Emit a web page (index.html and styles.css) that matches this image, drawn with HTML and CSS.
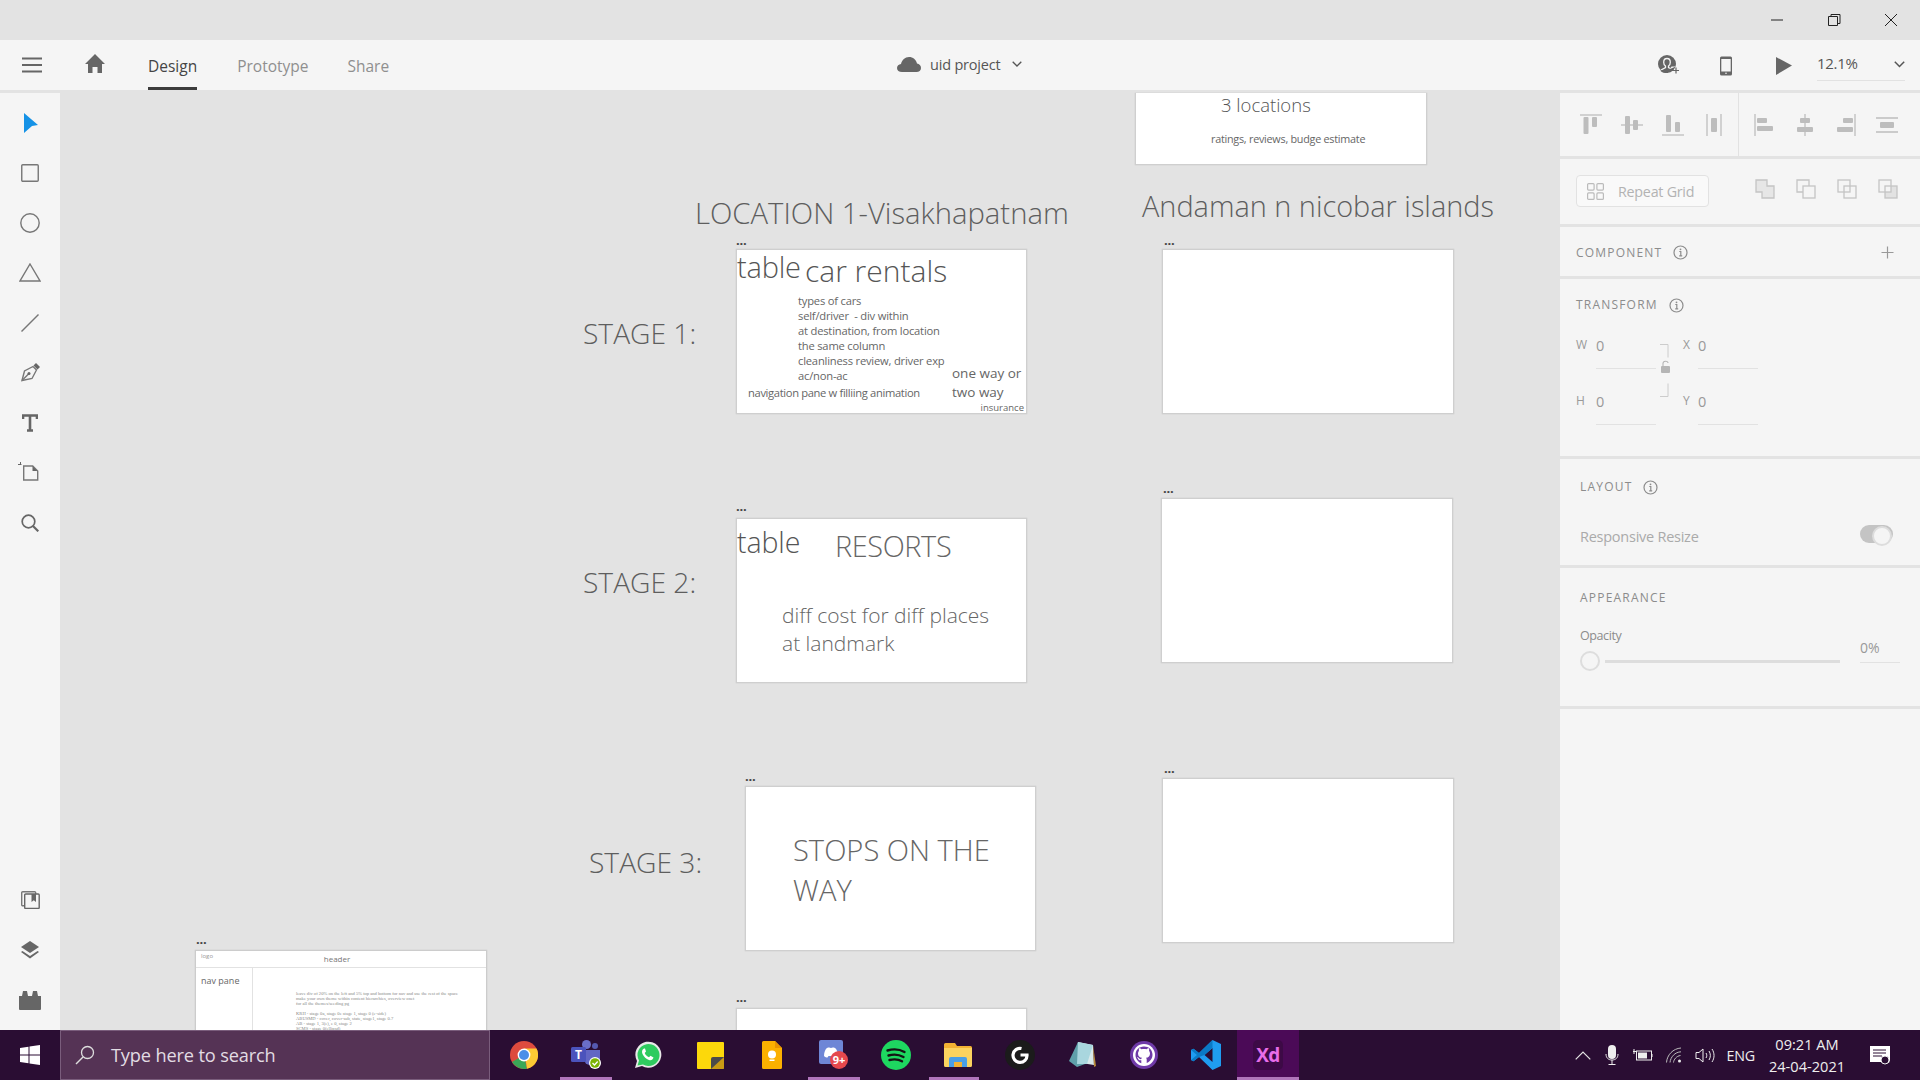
FILE: index.html
```html
<!DOCTYPE html>
<html lang="en">
<head>
<meta charset="utf-8">
<title>uid project - Adobe XD</title>
<link rel="stylesheet" href="styles.css">
</head>
<body>
<div class="app">
  <header class="titlebar">
    <svg class="win" width="16" height="16" viewBox="0 0 16 16"><path d="M2 8h12" class="ln"/></svg>
    <svg class="win" width="16" height="16" viewBox="0 0 16 16"><path d="M2.500 4.500h9v9h-9zM5 4.500V2.500h9v9h-2.500" class="ln"/></svg>
    <svg class="win" width="16" height="16" viewBox="0 0 16 16"><path d="M2 2l12 12M14 2L2 14" class="ln"/></svg>
  </header>
  <nav class="topbar">
    <svg class="burger" width="20" height="16" viewBox="0 0 20 16"><path d="M0 1.500h20M0 8h20M0 14.500h20" stroke="#666" stroke-width="2.200"/></svg>
    <svg class="home" width="22" height="20" viewBox="0 0 22 20"><path d="M11 0L21 10h-3v9h-4.500v-6h-5v6H4v-9H1z" fill="#666"/></svg>
    <a class="tab active">Design</a>
    <a class="tab">Prototype</a>
    <a class="tab">Share</a>
    <div class="doc">
      <svg width="24" height="15" viewBox="0 0 24 15"><path d="M5 15C2 15 0 13.500 0 11c0-2.200 1.800-3.800 4-4C5 3 8 0 12 0s7 2.500 8 6.500c2.300.3 4 2 4 4.500 0 2.500-2 4-4.500 4z" fill="#666"/></svg>
      <span>uid project</span>
      <svg width="10" height="6" viewBox="0 0 10 6"><path d="M.7.700L5 5l4.300-4.300" fill="none" stroke="#555" stroke-width="1.300"/></svg>
    </div>
    <div class="top-right">
      <svg class="tr-user" width="22" height="20" viewBox="0 0 22 20"><circle cx="9" cy="9" r="9" fill="#666"/><path d="M9 3.500c2.200 0 3.300 1.700 3.300 3.700 0 1.700-.8 3.200-1.800 3.800v1.500l2 1" fill="none" stroke="#f5f5f5" stroke-width="1.300"/><path d="M9 3.500C6.800 3.500 5.700 5.200 5.700 7.200c0 1.700.8 3.200 1.800 3.800v1.500L3 15" fill="none" stroke="#f5f5f5" stroke-width="1.300"/><path d="M15 15.500h6M18 12.500v6" stroke="#666" stroke-width="1.200"/><path d="M12 14l1.500-2.500h4.500" fill="#f5f5f5"/><path d="M3 15.500c1.500 1.500 3.500 2 7 2" fill="none" stroke="#666" stroke-width="1.200"/></svg>
      <svg class="tr-phone" width="12" height="20" viewBox="0 0 12 20"><rect width="12" height="19" y=".5" rx="1.500" fill="#666"/><rect x="1.300" y="3" width="9.400" height="12.500" fill="#f5f5f5"/><circle cx="6" cy="17.300" r=".8" fill="#f5f5f5"/></svg>
      <svg class="tr-play" width="16" height="18" viewBox="0 0 16 18"><path d="M0 0l16 8.500L0 18z" fill="#666"/></svg>
      <div class="zoomval"><span>12.1%</span><svg width="11" height="7" viewBox="0 0 11 7"><path d="M.8.800l4.700 4.700L10.200.800" fill="none" stroke="#555" stroke-width="1.500"/></svg></div>
    </div>
  </nav>
  <main class="main">
    <aside class="tools">
      <div class="tool"><svg class="ic-arrow" width="16" height="20" viewBox="0 0 16 20"><path d="M1 0l14 12-6 1-8 7z" fill="#1592e6"/></svg></div>
      <div class="tool"><svg width="18" height="18" viewBox="0 0 18 18"><rect x=".75" y=".75" width="16.500" height="16.500" rx="1" class="st"/></svg></div>
      <div class="tool"><svg width="20" height="20" viewBox="0 0 20 20"><circle cx="10" cy="10" r="9.200" class="st"/></svg></div>
      <div class="tool"><svg class="ic-tri" width="22" height="19" viewBox="0 0 22 19"><path d="M11 1l10 17H1z" class="st"/></svg></div>
      <div class="tool"><svg width="18" height="18" viewBox="0 0 18 18"><path d="M.5 17.500l17-17" class="st"/></svg></div>
      <div class="tool"><svg class="ic-pen" width="20" height="20" viewBox="0 0 20 20"><path d="M1 18.500L3.500 9 12 4.500l3.500 3.500L11 16.500z" class="st"/><path d="M1 18.500L7.500 12" class="st"/><circle cx="8" cy="11.500" r="1.500" fill="#666"/><path d="M12.500 3.500L15 1l4 4-2.500 2.500z" fill="#666"/></svg></div>
      <div class="tool"><svg width="16" height="18" viewBox="0 0 16 18"><path d="M8 2v15M1 5V1.500h14V5M5 16.500h6" fill="none" stroke="#666" stroke-width="2.600"/></svg></div>
      <div class="tool"><svg class="ic-board" width="21" height="19" viewBox="0 0 21 19"><path d="M5.700 4h9l5 5v9h-14z" class="st"/><path d="M14.500 4v5h5" fill="#666"/><path d="M0 2.500h3.500M2.500 0v2" stroke="#666" stroke-width="1"/></svg></div>
      <div class="tool"><svg width="18" height="18" viewBox="0 0 18 18"><circle cx="7.500" cy="7.500" r="6.300" fill="none" stroke="#666" stroke-width="1.700"/><path d="M12 12l5.300 5.300" stroke="#666" stroke-width="2.200"/></svg></div>
      <div class="tools-bottom">
        <div class="tool"><svg width="19" height="18" viewBox="0 0 19 18"><rect x=".7" y=".7" width="14" height="14" rx="1" class="st"/><rect x="3.700" y="3" width="14.500" height="14.500" rx="1" fill="#f5f5f5" stroke="#666" stroke-width="1.400"/><path d="M10.500 3h4.500v8l-2.200-1.800-2.300 1.800z" fill="#666"/></svg></div>
        <div class="tool"><svg width="20" height="18" viewBox="0 0 20 18"><path d="M10 0l9 6-9 6-9-6z" fill="#666"/><path d="M2.500 10L1 11l9 6.500 9-6.500-1.500-1L10 15z" fill="#666"/></svg></div>
        <div class="tool"><svg width="22" height="19" viewBox="0 0 22 19"><path d="M3 5l1-5h4l1 5h4l1-5h4l1 5h3v13a1 1 0 0 1-1 1H1a1 1 0 0 1-1-1V5z" fill="#666"/></svg></div>
      </div>
    </aside>

    <section class="canvas">
      <div class="board b-top">
        <p class="t-3loc">3 locations</p>
        <p class="t-rating">ratings, reviews, budge estimate</p>
      </div>
      <h2 class="label l-loc1">LOCATION 1-Visakhapatnam</h2>
      <h2 class="label l-loc2">Andaman n nicobar islands</h2>
      <h2 class="label l-s1">STAGE 1:</h2>
      <h2 class="label l-s2">STAGE 2:</h2>
      <h2 class="label l-s3">STAGE 3:</h2>

      <span class="dots d1">...</span>
      <div class="board b1">
        <span class="big t-table">table</span>
        <span class="big t-car">car rentals</span>
        <div class="t-list">
          <p>types of cars</p><p>self/driver&nbsp; - div within</p><p>at destination, from location</p><p>the same column</p><p>cleanliness review, driver exp</p><p>ac/non-ac</p>
        </div>
        <span class="t-nav">navigation pane w filliing animation</span>
        <span class="t-oneway">one way or<br>two way</span>
        <span class="t-ins">insurance</span>
      </div>
      <span class="dots d2">...</span>
      <div class="board b2">
        <span class="big t-table2">table</span>
        <span class="t-resorts">RESORTS</span>
        <span class="t-diff">diff cost for diff places<br>at landmark</span>
      </div>
      <span class="dots d3">...</span>
      <div class="board b3"><span class="t-stops">STOPS ON THE<br>WAY</span></div>
      <span class="dots d4">...</span>
      <div class="board b4"></div>
      <span class="dots d5">...</span>
      <div class="board b5"></div>
      <span class="dots d6">...</span>
      <div class="board b6"></div>
      <span class="dots d7">...</span>
      <div class="board b7"></div>
      <span class="dots d8">...</span>
      <div class="board b8">
        <div class="mini-head"><span class="mini-logo">logo</span><span class="mini-title">header</span></div>
        <div class="mini-body">
          <div class="mini-nav">nav pane</div>
          <div class="mini-text">
            <p>leave div of 20% on the left and 5% top and bottom for nav and use the rest of the space</p>
            <p>make your own theme within content hierarchies, overview onet</p>
            <p>for all the themes/seeding pg</p>
            <p class="gap">KRH - stage 0a, stage 0e stage 1, stage 0 (e-side)</p>
            <p>ABUSMD - cover, cover-sub, state, stage1, stage 0.7</p>
            <p>AB - stage 1, 3(e), e 0, stage 2</p>
            <p>SCMS - stage 0(ellipsd)</p>
          </div>
        </div>
      </div>
    </section>

    <aside class="panel">
      <div class="sec s-align">
        <div class="agroup ag1">
          <svg class="ai" width="24" height="22" viewBox="0 0 24 22"><path d="M1 1h22" class="al"/><rect x="4.500" y="3" width="5" height="17" rx="1" class="af"/><rect x="13" y="3" width="5" height="10" rx="1" class="af"/></svg>
          <svg class="ai" width="24" height="18" viewBox="0 0 24 18"><path d="M1 9h22" class="al"/><rect x="5" y="0" width="5" height="18" rx="1" class="af"/><rect x="13" y="4" width="5" height="10" rx="1" class="af"/></svg>
          <svg class="ai" width="24" height="22" viewBox="0 0 24 22"><path d="M1 21h22" class="al"/><rect x="5" y="1" width="5" height="17" rx="1" class="af"/><rect x="14" y="8" width="5" height="10" rx="1" class="af"/></svg>
          <svg class="ai" width="16" height="22" viewBox="0 0 16 22"><path d="M1 0v22M15 0v22" class="al"/><rect x="5" y="4" width="6" height="14" rx="1" class="af"/></svg>
        </div>
        <div class="agroup ag2">
          <svg class="ai" width="20" height="22" viewBox="0 0 20 22"><path d="M1 0v22" class="al"/><rect x="3" y="4" width="10" height="5" rx="1" class="af"/><rect x="3" y="12" width="16" height="5" rx="1" class="af"/></svg>
          <svg class="ai" width="18" height="22" viewBox="0 0 18 22"><path d="M9 0v22" class="al"/><rect x="4" y="4" width="10" height="5" rx="1" class="af"/><rect x="1" y="13" width="16" height="5" rx="1" class="af"/></svg>
          <svg class="ai" width="20" height="22" viewBox="0 0 20 22"><path d="M19 0v22" class="al"/><rect x="7" y="4" width="10" height="5" rx="1" class="af"/><rect x="1" y="13" width="16" height="5" rx="1" class="af"/></svg>
          <svg class="ai" width="22" height="16" viewBox="0 0 22 16"><path d="M0 1h22M0 15h22" class="al"/><rect x="4" y="5" width="14" height="6" rx="1" class="af"/></svg>
        </div>
      </div>
      <div class="sec s-grid">
        <div class="rgrid">
          <svg width="17" height="17" viewBox="0 0 17 17"><g fill="none" stroke="#bbb" stroke-width="1.200"><rect x=".6" y=".6" width="6.500" height="6.500" rx="1"/><rect x="9.900" y=".6" width="6.500" height="6.500" rx="1"/><rect x=".6" y="9.900" width="6.500" height="6.500" rx="1"/><rect x="9.900" y="9.900" width="6.500" height="6.500" rx="1"/></g></svg>
          <span>Repeat Grid</span>
        </div>
        <div class="bools">
          <svg width="20" height="20" viewBox="0 0 20 20"><path d="M1 1h11v6h7v12H7v-6H1z" fill="#e6e6e6" stroke="#c4c4c4" stroke-width="1.300"/></svg>
          <svg width="20" height="20" viewBox="0 0 20 20"><path d="M7 13H1V1h12v6" fill="none" stroke="#c4c4c4" stroke-width="1.300"/><rect x="7" y="7" width="12" height="12" fill="none" stroke="#c4c4c4" stroke-width="1.300"/></svg>
          <svg width="20" height="20" viewBox="0 0 20 20"><rect x="1" y="1" width="12" height="12" fill="none" stroke="#c4c4c4" stroke-width="1.300"/><rect x="7" y="7" width="12" height="12" fill="none" stroke="#c4c4c4" stroke-width="1.300"/></svg>
          <svg width="20" height="20" viewBox="0 0 20 20"><rect x="7" y="7" width="6" height="6" fill="#f5f5f5"/><path d="M13 7h6v12H7v-6h6z" fill="#e2e2e2"/><rect x="1" y="1" width="12" height="12" fill="none" stroke="#c4c4c4" stroke-width="1.300"/><rect x="7" y="7" width="12" height="12" fill="none" stroke="#c4c4c4" stroke-width="1.300"/></svg>
        </div>
      </div>
      <div class="sec s-comp">
        <span class="cap">COMPONENT</span>
        <svg class="info" width="15" height="15" viewBox="0 0 15 15"><use href="#i"/></svg>
        <svg class="plus" width="13" height="13" viewBox="0 0 13 13"><path d="M6.500.5v12M.5 6.500h12" stroke="#999" stroke-width="1.200"/></svg>
      </div>
      <div class="sec s-trans">
        <div class="cap-row"><span class="cap">TRANSFORM</span>
        <svg class="info" width="15" height="15" viewBox="0 0 15 15"><use href="#i"/></svg></div>
        <div class="fields">
          <span class="flab">W</span><span class="fval">0</span><span class="fgap"></span><span class="flab">X</span><span class="fval">0</span>
          <span class="flab">H</span><span class="fval">0</span><span class="fgap"></span><span class="flab">Y</span><span class="fval">0</span>
          <svg class="lock" width="10" height="54" viewBox="0 0 10 54"><path d="M0 .5h8v13M0 52.500h8v-13" fill="none" stroke="#ccc"/><path d="M3 22v-2.500c0-3 5-3 5-.5" fill="none" stroke="#b5b5b5" stroke-width="1.100"/><rect x="1" y="22" width="9" height="7" rx="1" fill="#b5b5b5"/></svg>
        </div>
      </div>
      <div class="sec s-layout">
        <div class="cap-row"><span class="cap">LAYOUT</span>
        <svg class="info" width="15" height="15" viewBox="0 0 15 15"><use href="#i"/></svg></div>
        <div class="resp"><span>Responsive Resize</span><i class="toggle"></i></div>
      </div>
      <div class="sec s-app">
        <span class="cap">APPEARANCE</span>
        <div class="op">
          <div class="op-left"><span class="op-lab">Opacity</span>
            <div class="slider"><i class="knob"></i><i class="track"></i></div>
          </div>
          <span class="op-val">0%</span>
        </div>
      </div>
      <div class="sec s-rest"></div>
    </aside>
  </main>
  <footer class="taskbar">
    <div class="start"><svg width="20" height="20" viewBox="0 0 20 20"><path d="M0 3l8.500-1.300v7.800H0zM9.500 1.500L20 0v9.500H9.500zM0 10.500h8.500v7.800L0 17zM9.500 10.500H20V20L9.500 18.500z" fill="#fff"/></svg></div>
    <div class="search"><svg width="20" height="20" viewBox="0 0 20 20"><circle cx="12.500" cy="7.500" r="6" fill="none" stroke="#ddd" stroke-width="1.300"/><path d="M8 12l-7 7" stroke="#ddd" stroke-width="1.400"/></svg><span>Type here to search</span></div>
    <div class="apps">
      <div class="app-i"><svg width="28" height="28" viewBox="0 0 28 28"><circle cx="14" cy="14" r="14" fill="#dd4b3e"/><path d="M14 14L2 21a14 14 0 0 0 15 6.700z" fill="#3aa757"/><path d="M14 7.500h12.500A14 14 0 0 1 17 27.700z" fill="#fcc934"/><circle cx="14" cy="14" r="6.400" fill="#fff"/><circle cx="14" cy="14" r="5" fill="#4a8fe8"/></svg></div>
      <div class="app-i on"><svg width="32" height="30" viewBox="0 0 32 30"><circle cx="16.500" cy="4.500" r="4.500" fill="#6b6fc9"/><circle cx="25" cy="6" r="3" fill="#5559b0"/><path d="M14 10h16v9a6 6 0 0 1-6 6h-4a6 6 0 0 1-6-6z" fill="#6266c4"/><rect x="1" y="7" width="15" height="15" rx="1.500" fill="#4b53bc"/><text x="8.500" y="19" class="teams-t">T</text><circle cx="25" cy="23" r="6" fill="#fff"/><circle cx="25" cy="23" r="4.800" fill="#7cb305"/><path d="M22.500 23l2 2 3.200-3.500" fill="none" stroke="#fff" stroke-width="1.300"/></svg></div>
      <div class="app-i"><svg width="28" height="28" viewBox="0 0 28 28"><path d="M1 27l2-7a13 13 0 1 1 5 5z" fill="#e8e8e8"/><path d="M3.500 24.500l1.500-5a11 11 0 1 1 4 4z" fill="#2ecb5f"/><path d="M10 7.500c-2 1-2.500 3-1.500 5.500 1.500 3 3.500 5 6.500 6 2.300.7 4-.5 4.500-2.500l-3-1.700-1.500 1.500c-2-.8-3.500-2.300-4.300-4.300l1.300-1.500L11 7.500z" fill="#fff"/></svg></div>
      <div class="app-i"><svg width="27" height="27" viewBox="0 0 27 27"><path d="M1 0h25a1 1 0 0 1 1 1v25a1 1 0 0 1-1 1H1a1 1 0 0 1-1-1V1a1 1 0 0 1 1-1z" fill="#fcd80b"/><path d="M14 27V17a2 2 0 0 1 2-2h11v11a1 1 0 0 1-1 1z" fill="#4a4a4a"/><path d="M14 27l13-12v11a1 1 0 0 1-1 1z" fill="#c99a14"/></svg></div>
      <div class="app-i"><svg width="20" height="28" viewBox="0 0 20 28"><path d="M1.500 0H13l7 7v19.500a1.500 1.500 0 0 1-1.500 1.500h-17A1.500 1.500 0 0 1 0 26.500v-25A1.500 1.500 0 0 1 1.500 0z" fill="#fbb000"/><path d="M13 0l7 7h-7z" fill="#e89300"/><circle cx="10" cy="13.500" r="4" fill="#fff"/><rect x="7.500" y="18.500" width="5" height="1.500" fill="#fff"/></svg></div>
      <div class="app-i on"><svg width="30" height="30" viewBox="0 0 30 30"><rect x="0" y="0" width="24" height="24" rx="2" fill="#6e86d6"/><path d="M5 16c0-4 1.500-7 3-8 2-.8 3-.5 4 0 1-.5 2-.8 4 0 1.500 1 3 4 3 8-1 1-2.500 1.500-3.500 1.500l-1-1.500H9.500l-1 1.500C7.500 17.500 6 17 5 16z" fill="#fff"/><circle cx="20" cy="20" r="9" fill="#e5484d"/><text x="20" y="24" class="badge-t">9+</text></svg></div>
      <div class="app-i"><svg width="30" height="30" viewBox="0 0 30 30"><circle cx="15" cy="15" r="15" fill="#1ed760"/><path d="M6.500 10.500c6-1.800 12-1.300 17 1.500M7.500 15.500c5-1.400 10.500-1 15 1.500M8.500 20c4.500-1.100 9-.8 12.500 1.300" fill="none" stroke="#141414" stroke-width="2.400" stroke-linecap="round"/></svg></div>
      <div class="app-i on2"><svg width="28" height="24" viewBox="0 0 28 24"><path d="M0 1.500A1.500 1.500 0 0 1 1.500 0H11l2 3h13.500A1.500 1.500 0 0 1 28 4.500V10H0z" fill="#f2b233"/><path d="M0 5h28v17.500a1.500 1.500 0 0 1-1.500 1.500h-25A1.500 1.500 0 0 1 0 22.500z" fill="#fbd35f"/><path d="M5 24v-8a2 2 0 0 1 2-2h14a2 2 0 0 1 2 2v8h-5v-5h-8v5z" fill="#4a9fe6"/><rect x="10" y="19" width="8" height="5" fill="#f2b233"/></svg></div>
      <div class="app-i"><svg width="30" height="30" viewBox="0 0 30 30"><circle cx="15" cy="15" r="15" fill="#1b1b1b"/><path d="M16.500 8.500A7 7 0 1 0 22 15h-6.500" fill="none" stroke="#fff" stroke-width="3.200"/></svg></div>
      <div class="app-i"><svg width="28" height="28" viewBox="0 0 28 28"><path d="M10 1l15 3 1 20-19-3z" fill="#d8e8ea"/><path d="M10 1L1 20l8 6 8-3z" fill="#5fa0aa"/><path d="M10 1l15 3-6 19H9z" fill="#a9d6de"/><path d="M25 4l3 21-2 1z" fill="#b98a3a"/></svg></div>
      <div class="app-i"><svg width="28" height="28" viewBox="0 0 28 28"><circle cx="14" cy="14" r="14" fill="#6f3aa8"/><circle cx="14" cy="14" r="11" fill="#fff"/><path d="M14 5.500c-5 0-8.500 3.500-8.500 8.500 0 3.800 2.500 7 5.800 8.200v-3c-2.300.5-3-1-3.300-1.800-.5-.8-1-1-1-1 .7-.5 1.800.3 2.300 1.200.6.800 1.600.6 2 .4.100-.6.400-1 .7-1.300-2.500-.3-4-1.500-4-4.300 0-1 .4-1.900 1-2.600-.2-.6-.3-1.500.1-2.500 1 0 1.900.5 2.500 1 1.500-.5 3.300-.5 4.800 0 .6-.5 1.500-1 2.500-1 .4 1 .3 1.900.1 2.500.6.700 1 1.600 1 2.600 0 2.800-1.500 4-4 4.300.4.400.7 1 .7 1.800v3.500c3.300-1.200 5.800-4.400 5.800-8.200C22.500 9 19 5.500 14 5.500z" fill="#6f3aa8"/></svg></div>
      <div class="app-i"><svg width="30" height="30" viewBox="0 0 30 30"><path d="M21.500 0L30 4v22l-8.500 4L8 17l-5.500 4.300L0 20v-10l2.500-1.300L8 13zM21.500 8l-8 7 8 7z" fill="#1f9cf0"/><path d="M21.500 0v8l-8 7L8 17l-5.500 4.300L0 20l6-5L0 10l2.500-1.300L8 13z" fill="#0a7ac6"/></svg></div>
      <div class="app-i xd"><div class="xd-logo">Xd</div></div>
    </div>
    <div class="tray">
      <svg class="t-caret" width="16" height="9" viewBox="0 0 16 9"><path d="M.7 8.300L8 1l7.300 7.300" fill="none" stroke="#e6e6e6" stroke-width="1.200"/></svg>
      <svg class="t-mic" width="14" height="20" viewBox="0 0 14 20"><rect x="3" y="0" width="8" height="14" rx="4" fill="#eee"/><path d="M1 9c0 4 2.500 6 6 6s6-2 6-6M7 15v4M3.500 19.500h7" fill="none" stroke="#eee"/></svg>
      <svg class="t-batt" width="20" height="12" viewBox="0 0 20 12"><rect x="3.500" y="2" width="15" height="9" fill="none" stroke="#eee"/><rect x="5" y="3.500" width="9" height="6" fill="#eee"/><path d="M19 5v3" stroke="#eee"/><path d="M0 2.500h3.500M1 0v5" stroke="#eee"/></svg>
      <svg class="t-wifi" width="16" height="16" viewBox="0 0 16 16"><path d="M.5 15.500C1 8 7 1.500 15 1M4 15.500C4.500 10 9 5 15 4.800M7.500 15.500c.2-3 3-6.500 7-7" fill="none" stroke="#bbb"/><circle cx="13.500" cy="14" r="1.500" fill="#eee"/></svg>
      <svg class="t-vol" width="20" height="17" viewBox="0 0 20 17"><path d="M1 5.500h3L8 2v13l-4-3.500H1z" fill="none" stroke="#eee"/><path d="M11 6c1 1.500 1 3.500 0 5M14 4c1.800 2.800 1.800 6.200 0 9M17 2c2.700 4 2.700 9 0 13" fill="none" stroke="#eee"/></svg>
      <span class="t-eng">ENG</span>
      <div class="t-time"><span>09:21 AM</span><span>24-04-2021</span></div>
      <svg class="t-note" width="20" height="19" viewBox="0 0 20 19"><path d="M0 0h20v14l-1 3h-6l-2-1H0z" fill="#fff"/><path d="M3 4h13M3 7h13M3 10h9" stroke="#2a0d33" stroke-width="1"/><circle cx="15" cy="14" r="4" fill="#2a0d33" stroke="#eee"/></svg>
    </div>
  </footer>
</div>
<svg class="defs" width="0" height="0"><defs><g id="i"><circle cx="7.500" cy="7.500" r="6.500" fill="none" stroke="#8c8c8c" stroke-width="1.200"/><path d="M6.300 6.500h1.500v4M6.200 10.800h3" fill="none" stroke="#8c8c8c" stroke-width="1.200"/><circle cx="7.500" cy="4.300" r=".9" fill="#8c8c8c"/></g></defs></svg>
</body>
</html>
```
FILE: styles.css
```css
* { box-sizing: border-box; }
html, body { margin: 0; height: 100%; overflow: hidden; }
body { font-family: "Open Sans", "Noto Sans", sans-serif; color: #666; background: #e3e3e3; }
p, h2 { margin: 0; font-weight: 400; }
.defs { position: absolute; }
.app { width: 1920px; height: 1080px; display: flex; flex-direction: column; }

/* title bar */
.titlebar { height: 40px; flex: none; background: #e3e3e3; display: flex; justify-content: flex-end; align-items: center; gap: 41px; padding: 0 21px 0 0; }
.ln { fill: none; stroke: #222; stroke-width: 1; }

/* top bar */
.topbar { height: 50px; flex: none; background: #f5f5f5; display: flex; align-items: center; position: relative; padding-left: 22px; }
.burger { margin-right: 42px; }
.home { margin-right: 42px; margin-top: -2px; }
.tab { font-size: 15.500px; color: #8f8f8f; margin-right: 39px; height: 50px; line-height: 50px; padding-top: 1px; border-bottom: 3px solid transparent; }
.tab.active { color: #444; border-bottom-color: #3c3c3c; margin-right: 40px; }
.doc { position: absolute; left: 897px; top: -1px; height: 50px; display: flex; align-items: center; gap: 9px; font-size: 14.500px; color: #555; }
.doc span { letter-spacing: -.2px; }
.doc svg:last-child { margin-left: 3px; }
.top-right { margin-left: auto; display: flex; align-items: center; height: 50px; padding-right: 15px; }
.tr-user { margin-right: 40px; }
.tr-phone { margin-right: 44px; margin-top: 1px; }
.tr-play { margin-right: 25px; margin-top: 1px; }
.zoomval { width: 88px; height: 30px; border-bottom: 1px solid #e2e2e2; display: flex; justify-content: space-between; align-items: center; font-size: 15px; color: #555; margin-top: 1px; }
.zoomval span { letter-spacing: -.3px; margin-top: -4px; }
.zoomval svg { margin-top: -2px; }

/* main */
.main { flex: 1; min-height: 0; display: flex; }
.tools { width: 60px; flex: none; margin-top: 3px; padding: 5px 0; background: #f5f5f5; display: flex; flex-direction: column; }
.tool { height: 50px; display: flex; align-items: center; justify-content: center; }
.tools-bottom { margin-top: auto; }
.st { fill: none; stroke: #777; stroke-width: 1.400; }
.ic-arrow { margin-left: 2px; }
.ic-tri { margin-top: -2px; }
.ic-pen { margin-top: -2px; margin-left: 1px; }
.ic-board { margin-left: -3px; margin-top: -3px; }

/* canvas: free-form artboards */
.canvas { flex: 1; position: relative; overflow: hidden; }
.board { position: absolute; width: 291px; height: 165px; background: #fff; border: 1px solid #cfcfcf; box-shadow: 0 0 1px #bbb; }
.label { position: absolute; line-height: 36px; font-weight: 300; white-space: nowrap; color: #5e5e5e; font-size: 28.200px; }
.dots { position: absolute; font-size: 13px; line-height: 12px; font-weight: 700; color: #444; letter-spacing: -.2px; }

.b-top { left: 1075px; top: 3px; width: 292px; height: 72px; border-top: 0; }
.t-3loc { position: absolute; left: 85px; top: 0; font-size: 18.500px; line-height: 24px; font-weight: 300; color: #555; }
.t-rating { position: absolute; left: 75px; top: 38px; font-size: 10.800px; line-height: 16px; letter-spacing: -.25px; }
.l-loc1 { left: 635px; top: 105px; font-size: 29.250px; }
.l-loc2 { left: 1082px; top: 98px; font-size: 28.900px; }
.l-s1 { left: 523px; top: 225px; }
.l-s2 { left: 523px; top: 474px; }
.l-s3 { left: 529px; top: 754px; }

.b1 { left: 676px; top: 159px; }
.d1 { left: 676px; top: 144px; }
.big { position: absolute; font-size: 29px; line-height: 32px; font-weight: 300; color: #555; }
.t-table { left: 0; top: 1px; letter-spacing: -.2px; }
.t-car { left: 68px; top: 5px; font-size: 30px; }
.t-list { position: absolute; left: 61px; top: 43px; font-size: 11.200px; line-height: 15px; letter-spacing: -.2px; white-space: nowrap; }
.t-nav { position: absolute; left: 11px; top: 135px; font-size: 11.200px; line-height: 16px; letter-spacing: -.35px; white-space: nowrap; }
.t-oneway { position: absolute; left: 215px; top: 114px; font-size: 13.500px; line-height: 19px; white-space: nowrap; }
.t-ins { position: absolute; right: 2px; bottom: -1px; font-size: 9.500px; line-height: 12px; }

.b2 { left: 676px; top: 428px; }
.d2 { left: 676px; top: 410px; }
.t-table2 { left: 0; top: 7px; font-size: 28.500px; letter-spacing: -.1px; }
.t-resorts { position: absolute; left: 98px; top: 8px; font-size: 28.900px; line-height: 38px; font-weight: 300; letter-spacing: -.4px; }
.t-diff { position: absolute; left: 45px; top: 82px; font-size: 21px; line-height: 28px; font-weight: 300; white-space: nowrap; }

.b3 { left: 685px; top: 696px; }
.d3 { left: 685px; top: 680px; }
.t-stops { position: absolute; left: 47px; top: 43px; font-size: 29.100px; line-height: 40px; font-weight: 300; white-space: nowrap; }

.b4 { left: 1102px; top: 159px; width: 292px; }
.d4 { left: 1104px; top: 144px; }
.b5 { left: 1101px; top: 408px; width: 292px; }
.d5 { left: 1103px; top: 392px; }
.b6 { left: 1102px; top: 688px; width: 292px; }
.d6 { left: 1104px; top: 672px; }
.b7 { left: 676px; top: 918px; height: 30px; }
.d7 { left: 676px; top: 901px; }

.b8 { left: 135px; top: 860px; height: 90px; width: 292px; border: 1px solid #ccc; }
.d8 { left: 136px; top: 843px; }
.mini-head { height: 17px; border-bottom: 1px solid #e2e2e2; position: relative; display: flex; justify-content: center; }
.mini-logo { position: absolute; left: 5px; top: 1px; font-size: 6px; line-height: 9px; color: #999; }
.mini-title { font-size: 8px; line-height: 16px; color: #777; margin-left: -8px; }
.mini-body { display: flex; height: 72px; }
.mini-nav { width: 57px; border-right: 1px solid #e2e2e2; font-size: 9px; line-height: 12px; padding: 7px 0 0 5px; color: #666; }
.mini-text { padding: 23px 0 0 43px; font-family: "Liberation Serif", serif; font-size: 4.600px; line-height: 5px; color: #888; white-space: nowrap; }
.mini-text .gap { margin-top: 5px; }

/* right panel */
.panel { width: 360px; flex: none; margin-top: 3px; display: flex; flex-direction: column; gap: 3px; }
.sec { background: #f5f5f5; flex: none; }
.s-align { height: 63px; display: flex; }
.agroup { display: grid; grid-template-columns: repeat(4, 41px); align-items: center; justify-items: center; height: 100%; }
.ag1 { width: 179px; padding-left: 10px; border-right: 1px solid #e2e2e2; }
.ag2 { padding-left: 4px; }
.al { stroke: #bdbdbd; stroke-width: 1.300; fill: none; }
.af { fill: #bdbdbd; }
.s-grid { height: 65px; padding: 16px 22px 0 16px; display: flex; justify-content: space-between; }
.rgrid { width: 133px; height: 32px; border: 1px solid #e2e2e2; border-radius: 4px; background: #f9f9f9; display: flex; align-items: center; gap: 14px; padding-left: 10px; font-size: 14.300px; color: #b3b3b3; letter-spacing: -.25px; white-space: nowrap; }
.bools { display: grid; grid-template-columns: repeat(4, 20px); gap: 21px; height: 20px; margin-top: 4px; }
.cap { font-size: 12px; line-height: 16px; letter-spacing: 1.200px; color: #8c8c8c; }
.info { flex: none; }
.s-comp { height: 49px; display: flex; align-items: center; padding: 2px 26px 0 16px; }
.s-comp .info { margin-left: 11px; }
.plus { margin-left: auto; }
.cap-row { display: flex; align-items: center; gap: 11px; }
.s-trans { height: 177px; padding: 18px 0 0 16px; position: relative; }
.fields { display: grid; grid-template-columns: 20px 60px 27px 15px 60px; grid-auto-rows: 56px; margin-top: 20px; position: relative; }
.flab { font-size: 12px; line-height: 24px; color: #999; letter-spacing: .4px; }
.fval { height: 36px; border-bottom: 1px solid #e2e2e2; font-size: 14.500px; line-height: 26px; color: #999; }
.lock { position: absolute; left: 84px; top: 11px; }
.s-layout { height: 106px; padding: 20px 27px 0 20px; }
.resp { display: flex; justify-content: space-between; align-items: center; margin-top: 32px; font-size: 14.500px; color: #aaa; letter-spacing: -.25px; }
.toggle { display: block; width: 33px; height: 18px; border-radius: 9px; background: #c4c4c4; position: relative; margin-top: -5px; }
.toggle::after { content: ""; position: absolute; right: 1px; top: 1px; width: 16px; height: 16px; border-radius: 50%; background: #f5f5f5; border: 2px solid #ddd; }
.s-app { height: 138px; padding: 17px 20px 0; }
.op { display: flex; gap: 20px; margin-top: 20px; align-items: flex-start; }
.op-left { width: 260px; }
.op-lab { display: block; font-size: 12.500px; line-height: 18px; color: #8c8c8c; letter-spacing: -.4px; }
.slider { display: flex; align-items: center; gap: 5px; margin-top: 6px; }
.knob { width: 20px; height: 20px; border-radius: 50%; border: 2px solid #ddd; background: #f5f5f5; }
.track { width: 235px; height: 3px; background: #ddd; }
.op-val { width: 40px; margin-top: 8px; height: 28px; line-height: 26px; font-size: 14px; color: #999; border-bottom: 1px solid #e2e2e2; }
.s-rest { flex: 1; }

/* taskbar */
.taskbar { height: 50px; flex: none; background: #2a0d33; display: flex; align-items: stretch; position: relative; z-index: 2; }
.start { width: 60px; display: flex; align-items: center; justify-content: center; }
.search { width: 430px; background: #553355; border: 1px solid #7a5d7c; display: flex; align-items: center; gap: 16px; padding-left: 14px; font-size: 18.200px; color: #e2dce3; letter-spacing: -.15px; }
.apps { display: flex; margin-left: 3px; }
.app-i { width: 62px; display: flex; align-items: center; justify-content: center; position: relative; }
.app-i.on::after { content: ""; position: absolute; left: 5px; right: 5px; bottom: 0; height: 3px; background: #b075bb; }
.app-i.on2::after { content: ""; position: absolute; left: 2px; right: 10px; bottom: 0; height: 3px; background: #b075bb; }
.teams-t { font: 700 12px "Open Sans", sans-serif; fill: #fff; text-anchor: middle; }
.badge-t { font: 700 11px "Open Sans", sans-serif; fill: #fff; text-anchor: middle; }
.xd { background: #4b0a57; border-bottom: 3px solid #b075bb; }
.xd-logo { width: 30px; height: 30px; border-radius: 5px; background: #3d0a46; color: #e86de8; font-weight: 700; font-size: 19px; line-height: 30px; text-align: center; letter-spacing: -.5px; margin-top: 3px; }
.tray { margin-left: auto; display: flex; align-items: center; padding-right: 5px; color: #eee; }
.t-caret { margin-right: 14px; }
.t-mic { margin-right: 14px; }
.t-batt { margin-right: 13px; }
.t-wifi { margin-right: 13px; }
.t-vol { margin-right: 11px; }
.t-eng { font-size: 14.300px; letter-spacing: -.2px; margin-right: 13px; }
.t-time { display: flex; flex-direction: column; align-items: center; font-size: 14.600px; line-height: 22px; width: 78px; margin-right: 24px; }
.t-note { margin-right: 25px; }
```
